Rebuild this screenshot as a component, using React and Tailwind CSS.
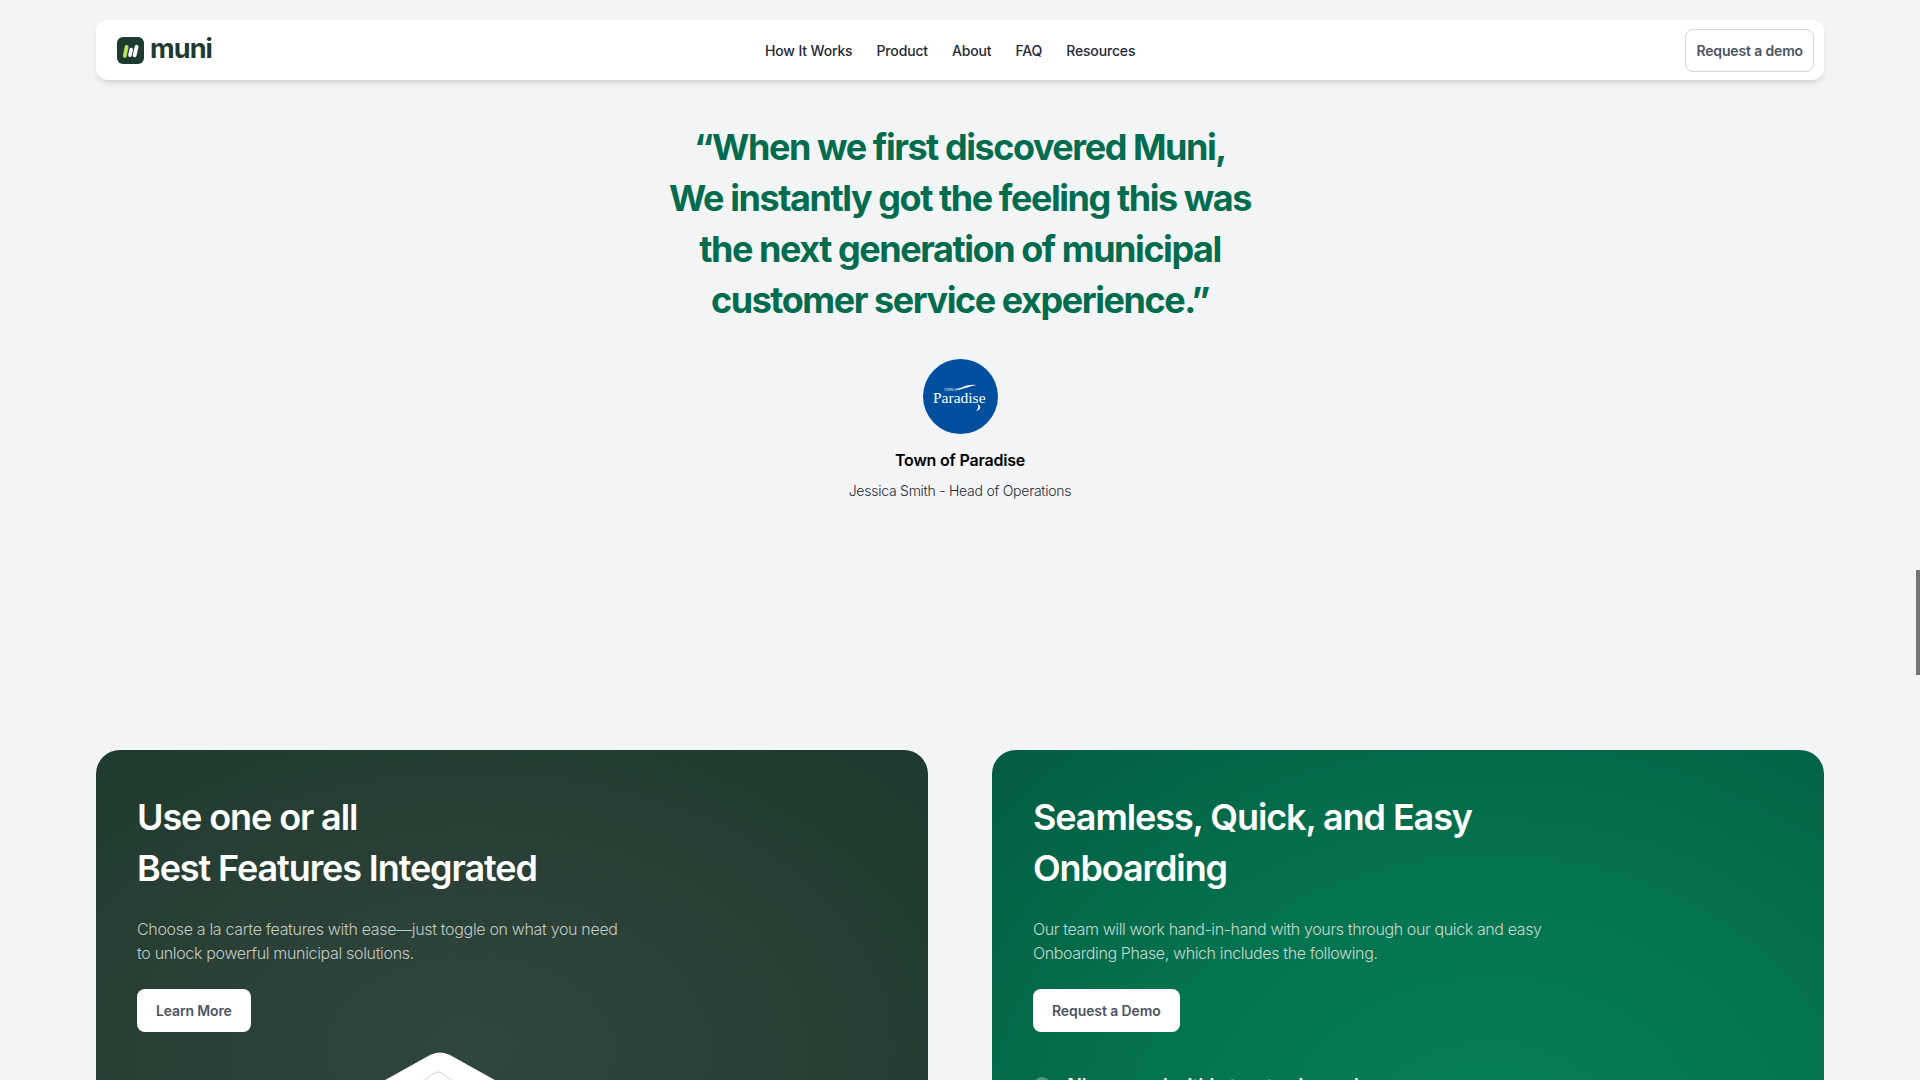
import React from 'react';

const font = { fontFamily: 'Inter, "Noto Sans", sans-serif' };

const MuniLogo = () => (
  <svg width="27" height="27" viewBox="0 0 27 27" className="shrink-0">
    <rect width="27" height="27" rx="6" fill="#1f3a2e" />
    <path d="M7.8 18.8 L9.6 9.8" stroke="#b7e05a" strokeWidth="3.8" strokeLinecap="round" />
    <path d="M13 18.2 L14.2 12.6" stroke="#ffffff" strokeWidth="3.6" strokeLinecap="round" />
    <path d="M17.6 18.4 L19.6 9.8" stroke="#ffffff" strokeWidth="3.8" strokeLinecap="round" />
  </svg>
);

const ParadiseLogo = () => (
  <div className="w-[75px] h-[75px] rounded-full bg-[#004f9f] flex items-center justify-center">
    <svg width="60" height="30" viewBox="0 0 60 30">
      <path d="M27 7 C32 6 37 2 46 3 C41 4 35 6 29 8" fill="#ffffff" />
      <text x="14" y="9" fill="#ffffff" fontFamily="Liberation Sans, sans-serif" fontSize="3">TOWN OF</text>
      <text x="3" y="21" fill="#ffffff" fontFamily="Liberation Serif, serif" fontSize="15.5">Paradise</text>
      <path d="M47 22 C52 24 51 28 46 29 C49 26 49 24 47 22 Z" fill="#ffffff" />
    </svg>
  </div>
);

const navLinks = ['How It Works', 'Product', 'About', 'FAQ', 'Resources'];

const App = () => {
  return (
    <div className="relative h-[1080px] overflow-hidden bg-[#f3f4f6]" style={font}>
      {/* Nav */}
      <div className="pt-5 px-24">
        <nav className="relative h-[60px] bg-white rounded-xl shadow-md flex items-center justify-between pl-[21px] pr-[10px]">
          <div className="flex items-center gap-[6px]">
            <MuniLogo />
            <span className="text-[27px] font-bold text-[#1f3a2e] leading-none tracking-[-0.9px] -mt-[3px]">muni</span>
          </div>
          <div className="absolute left-[669px] flex items-center gap-6 text-sm font-medium text-[#1f2937] tracking-[-0.15px] mt-[1px]">
            {navLinks.map((link) => (
              <a key={link}>{link}</a>
            ))}
          </div>
          <button className="h-[43px] px-[10px] bg-white border border-gray-300 rounded-lg text-sm font-semibold text-[#4b5563] tracking-[-0.15px] mt-[1px]">
            Request a demo
          </button>
        </nav>
      </div>

      {/* Testimonial */}
      <div className="flex flex-col items-center mt-[42px]">
        <h2 className="text-[36px] leading-[51px] font-bold text-[#046c4e] text-center tracking-[-1.45px]">
          “When we first discovered Muni,<br />
          We instantly got the feeling this was<br />
          the next generation of municipal<br />
          customer service experience.”
        </h2>
        <div className="mt-[33px]">
          <ParadiseLogo />
        </div>
        <p className="mt-[14px] text-base leading-6 font-semibold text-black tracking-[-0.2px]">Town of Paradise</p>
        <p className="mt-[7px] text-sm leading-6 font-light text-[#1f2937] tracking-[-0.25px]">Jessica Smith - Head of Operations</p>
      </div>

      {/* Cards */}
      <div className="grid grid-cols-2 gap-16 px-24 mt-[247px]">
        <div className="h-[400px] rounded-3xl p-[41px] bg-[radial-gradient(ellipse_at_45%_75%,#2f463c_0%,#2a4036_45%,#1f3a2e_90%)]">
          <h3 className="mt-[1px] text-[36px] leading-[51px] font-semibold text-white tracking-[-1.1px]">
            Use one or all<br />Best Features Integrated
          </h3>
          <p className="mt-[23px] text-base leading-6 font-light text-[#c3c9c6] max-w-[490px] tracking-[-0.33px]">
            Choose a la carte features with ease—just toggle on what you need to unlock powerful municipal solutions.
          </p>
          <button className="mt-[24px] h-[43px] px-[19px] bg-white rounded-lg text-sm font-semibold text-[#4b5563] tracking-[-0.15px]">
            Learn More
          </button>
          {/* Stacked layers illustration, only its top corner is in view */}
          <div className="relative">
            <svg width="130" height="40" viewBox="0 0 130 40" className="absolute left-[238px] top-[20px]">
              <path d="M3 32 L55 3 Q65 -2 75 3 L127 32 L127 40 L3 40 Z" fill="#ffffff" />
              <path d="M47 30 L58 22 Q63 18 68 22 L79 30" fill="none" stroke="#d1d5db" strokeWidth="1" />
            </svg>
          </div>
        </div>
        <div className="h-[400px] rounded-3xl p-[41px] bg-[radial-gradient(ellipse_at_60%_100%,#058058_0%,#04734f_50%,#045c42_100%)]">
          <h3 className="mt-[1px] text-[36px] leading-[51px] font-semibold text-white tracking-[-1.1px]">
            Seamless, Quick, and Easy<br />Onboarding
          </h3>
          <p className="mt-[23px] text-base leading-6 font-light text-[#c7d9d1] max-w-[520px] tracking-[-0.38px]">
            Our team will work hand-in-hand with yours through our quick and easy Onboarding Phase, which includes the following.
          </p>
          <button className="mt-[24px] h-[43px] px-[19px] bg-white rounded-lg text-sm font-semibold text-[#4b5563] tracking-[-0.1px]">
            Request a Demo
          </button>
          <div className="mt-[40px] flex items-center gap-[13px]">
            <span className="w-[18px] h-[18px] rounded-full bg-white/30" />
            <span className="text-lg font-semibold text-white">All wrapped within two to six weeks</span>
          </div>
        </div>
      </div>

      {/* Overlay scrollbar */}
      <div className="absolute right-0 top-[570px] w-[4px] h-[105px] bg-[#757575]" />
    </div>
  );
};

export default App;
